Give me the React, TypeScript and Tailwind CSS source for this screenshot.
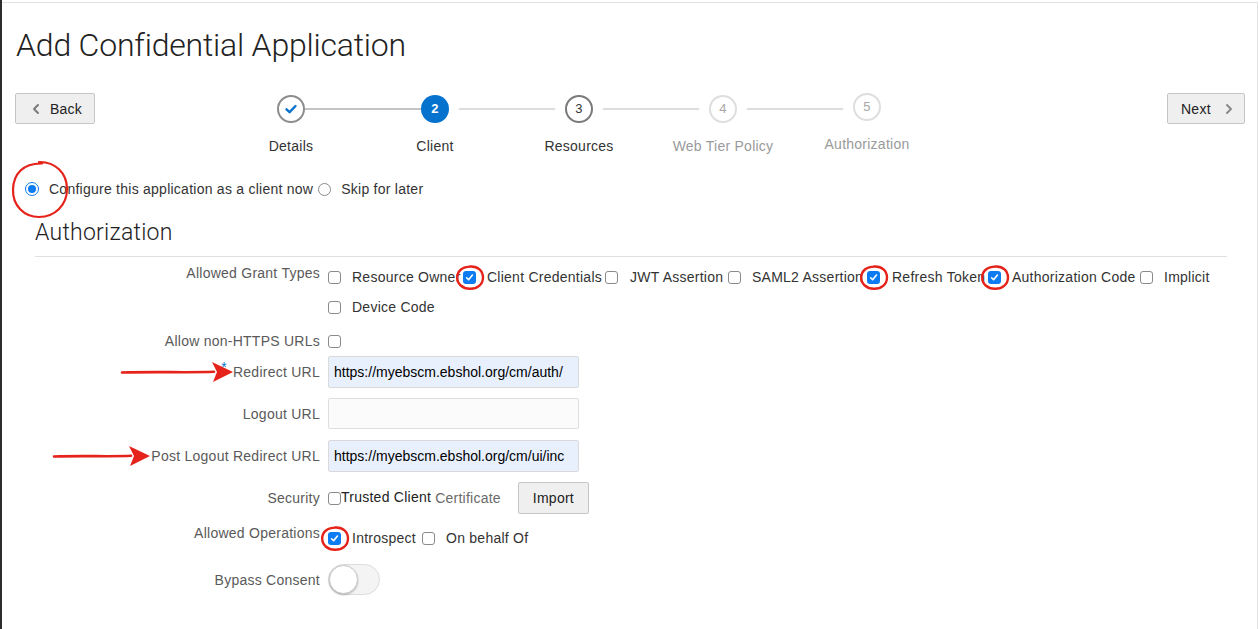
import React from "react";
import { ChevronLeft, ChevronRight } from "lucide-react";

const RED = "#e5231b";

function Box({ checked, circled }: { checked?: boolean; circled?: boolean }) {
  return (
    <span className="relative inline-flex w-[13px] h-[13px] shrink-0">
      {checked ? (
        <span className="w-[13px] h-[13px] rounded-[3px] bg-[#0d7cf2] flex items-center justify-center">
          <svg width="9" height="9" viewBox="0 0 10 10">
            <path d="M1.8 5.3 L4 7.5 L8.3 2.3" fill="none" stroke="#fff" strokeWidth="1.8" strokeLinecap="round" strokeLinejoin="round" />
          </svg>
        </span>
      ) : (
        <span className="w-[13px] h-[13px] rounded-[3px] border border-[#8a8a8a] bg-white" />
      )}
      {circled && (
        <svg className="absolute left-[-8px] top-[-7px] pointer-events-none" width="30" height="27" viewBox="0 0 30 27">
          <path d="M15 2.5 C23 2 28 7 28 13.5 C28 20.5 22 25 15 24.8 C7.5 24.6 2 20 2.2 13.3 C2.4 6.8 7.5 2.6 15.5 2.6" fill="none" stroke={RED} strokeWidth="2.4" strokeLinecap="round" />
        </svg>
      )}
    </span>
  );
}

function Opt({ label, checked, circled, w, gap = "ml-[11px]" }: { label: string; checked?: boolean; circled?: boolean; w?: string; gap?: string }) {
  return (
    <span className={`inline-flex items-center whitespace-nowrap ${w ?? ""}`}>
      <Box checked={checked} circled={circled} />
      <span className={`${gap} text-[#333]`}>{label}</span>
    </span>
  );
}

function Line({ kind, side }: { kind?: "dark" | "light"; side: "l" | "r" }) {
  return (
    <span className="flex-1 flex items-center">
      {kind === "dark" && <span className="flex-1 h-[2px] bg-[#c4c4c4]" />}
      {kind === "light" && <span className={`flex-1 h-[2px] bg-[#dddddd] ${side === "l" ? "mr-[10px]" : "ml-[10px]"}`} />}
    </span>
  );
}

function Step({ n, label, state, lineLeft, lineRight, lift }: { n: number; label: string; state: "done" | "active" | "next" | "off"; lineLeft?: "dark" | "light"; lineRight?: "dark" | "light"; lift?: boolean }) {
  const liftCls = lift ? "relative -top-[2px]" : "";
  const circle =
    state === "done" ? (
      <span className="w-[28px] h-[28px] shrink-0 rounded-full border-2 border-[#8d8d8d] bg-white flex items-center justify-center">
        <svg width="14" height="14" viewBox="0 0 14 14">
          <path d="M2.5 7.3 L5.6 10.2 L11.5 4" fill="none" stroke="#0572ce" strokeWidth="2.4" strokeLinecap="round" strokeLinejoin="round" />
        </svg>
      </span>
    ) : state === "active" ? (
      <span className="w-[28px] h-[28px] shrink-0 rounded-full bg-[#0572ce] text-white text-[13px] font-bold flex items-center justify-center">{n}</span>
    ) : state === "next" ? (
      <span className="w-[28px] h-[28px] shrink-0 rounded-full border-2 border-[#7a7a7a] bg-white text-[#333] text-[13px] flex items-center justify-center">{n}</span>
    ) : (
      <span className={`w-[28px] h-[28px] shrink-0 rounded-full border-2 border-[#dedede] bg-white text-[#a6a6a6] text-[13px] flex items-center justify-center ${liftCls}`}>{n}</span>
    );
  return (
    <div className="w-[144px] flex flex-col items-center">
      <div className="w-full flex items-center h-[28px]">
        <Line kind={lineLeft} side="l" />
        {circle}
        <Line kind={lineRight} side="r" />
      </div>
      <div className={`mt-[13px] text-[14px] leading-[20px] whitespace-nowrap ${liftCls} ${state === "off" ? "text-[#9a9a9a]" : "text-[#333]"}`}>{label}</div>
    </div>
  );
}

function Label({ children, className = "" }: { children: React.ReactNode; className?: string }) {
  return <div className={`w-[318px] shrink-0 text-right text-[#5a5a5a] ${className}`}>{children}</div>;
}

function Arrow({ x1, x2 }: { x1: number; x2: number }) {
  const w = x2 - x1;
  return (
    <svg width={w} height="24" viewBox={`0 0 ${w} 24`}>
      <path d={`M2 12.5 C${w * 0.3} 11.5 ${w * 0.6} 12.8 ${w - 20} 11.8`} fill="none" stroke={RED} strokeWidth="2.6" strokeLinecap="round" />
      <path d={`M${w - 22} 2 L${w - 1} 12 L${w - 21} 22 L${w - 17} 12 Z`} fill={RED} />
    </svg>
  );
}

export default function App() {
  return (
    <div className="w-[1259px] h-[629px] flex bg-white overflow-hidden tracking-[0.25px]" style={{ fontFamily: '"Liberation Sans", Arial, sans-serif' }}>
      <div className="w-[2px] shrink-0 bg-[#2d2d2d]" />
      <div className="relative w-[1256px] shrink-0 mt-[2px] border-t border-r border-[#e2e2e2] text-[14px] leading-[20px]">
        <h1 className="ml-[14px] mt-[24px] text-[32px] leading-[36px] font-light text-[#222] tracking-[-0.2px]" style={{ fontFamily: 'Roboto, "Liberation Sans", sans-serif' }}>
          Add Confidential Application
        </h1>

        <div className="mt-[30px] flex items-start">
          <button className="ml-[13px] w-[80px] h-[31px] bg-[#efefef] border border-[#c6c6c6] rounded-[2px] flex items-center text-[#222]">
            <ChevronLeft size={16} strokeWidth={3} color="#7a7a7a" className="ml-[12px]" />
            <span className="ml-[6px]">Back</span>
          </button>
          <div className="ml-[124px] mt-[2px] flex">
            <Step n={1} label="Details" state="done" lineRight="dark" />
            <Step n={2} label="Client" state="active" lineLeft="dark" lineRight="light" />
            <Step n={3} label="Resources" state="next" lineLeft="light" lineRight="light" />
            <Step n={4} label="Web Tier Policy" state="off" lineLeft="light" lineRight="light" />
            <Step n={5} label="Authorization" state="off" lineLeft="light" lift />
          </div>
          <button className="ml-[228px] w-[78px] h-[31px] bg-[#efefef] border border-[#c6c6c6] rounded-[2px] flex items-center text-[#222]">
            <span className="ml-[13px]">Next</span>
            <ChevronRight size={16} strokeWidth={3} color="#8a8a8a" className="ml-[10px]" />
          </button>
        </div>

        <div className="mt-[23px] flex items-center text-[#333]">
          <span className="relative ml-[23px] w-[14px] h-[14px] rounded-full border-[1.5px] border-[#0d7cf2] bg-white flex items-center justify-center">
            <span className="w-[8px] h-[8px] rounded-full bg-[#0d7cf2]" />
            <svg className="absolute left-[-17px] top-[-24px] pointer-events-none" width="62" height="62" viewBox="0 0 62 62">
              <path d="M30 3 C46 2.5 58 14 58 30 C58 46 46 58 30 58 C15 58 3.5 46.5 4 30.5 C4.5 15 14 4 33 4.5" fill="none" stroke={RED} strokeWidth="2.2" strokeLinecap="round" />
            </svg>
          </span>
          <span className="ml-[10px]">Configure this application as a client now</span>
          <span className="ml-[5px] w-[13px] h-[13px] rounded-full border border-[#8a8a8a] bg-white" />
          <span className="ml-[10px]">Skip for later</span>
        </div>

        <div className="ml-[33px] mr-[30px] mt-[20px]">
          <h2 className="text-[23px] leading-[28px] font-light text-[#222]" style={{ fontFamily: 'Roboto, "Liberation Sans", sans-serif' }}>
            Authorization
          </h2>
          <div className="mt-[9px] h-px bg-[#e0e0e0]" />
        </div>

        <div className="mt-[6px] flex">
          <Label>Allowed Grant Types</Label>
          <div className="ml-[8px] pt-[4px] flex flex-col gap-y-[10px]">
            <div className="flex">
              <Opt label="Resource Owner" w="w-[135px]" />
              <Opt label="Client Credentials" checked circled w="w-[142px]" />
              <Opt label="JWT Assertion" w="w-[123px]" gap="ml-[12px]" />
              <Opt label="SAML2 Assertion" w="w-[139px]" gap="ml-[11px]" />
              <Opt label="Refresh Token" checked circled w="w-[121px]" gap="ml-[12px]" />
              <Opt label="Authorization Code" checked circled w="w-[152px]" gap="ml-[11px]" />
              <Opt label="Implicit" gap="ml-[11px]" />
            </div>
            <div className="flex">
              <Opt label="Device Code" />
            </div>
          </div>
        </div>

        <div className="mt-[14px] flex items-center">
          <Label>Allow non-HTTPS URLs</Label>
          <span className="ml-[8px] inline-flex"><Box /></span>
        </div>

        <div className="relative mt-[5px] flex items-center">
          <div className="absolute left-[118px] top-[4px]"><Arrow x1={118} x2={232} /></div>
          <Label>
            <span className="relative -top-[5px] text-[#0572ce] mr-[6px]">*</span>Redirect URL
          </Label>
          <div className="ml-[8px] w-[251px] h-[32px] border border-[#dadada] rounded-[2px] bg-[#e8f0fe] pl-[5px] flex items-center overflow-hidden whitespace-nowrap text-black tracking-normal">
            https://myebscm.ebshol.org/cm/auth/
          </div>
        </div>

        <div className="mt-[10px] flex items-center">
          <Label>Logout URL</Label>
          <div className="ml-[8px] w-[251px] h-[31px] border border-[#dedede] rounded-[2px] bg-[#fbfbfb]" />
        </div>

        <div className="relative mt-[11px] flex items-center">
          <div className="absolute left-[50px] top-[4px]"><Arrow x1={50} x2={149} /></div>
          <Label>Post Logout Redirect URL</Label>
          <div className="ml-[8px] w-[251px] h-[32px] border border-[#dadada] rounded-[2px] bg-[#e8f0fe] pl-[5px] flex items-center overflow-hidden whitespace-nowrap text-black tracking-normal">
            https://myebscm.ebshol.org/cm/ui/inc
          </div>
        </div>

        <div className="mt-[10px] flex items-center">
          <Label>Security</Label>
          <span className="ml-[8px] inline-flex"><Box /></span>
          <span className="text-[#222] -mt-[2px]">Trusted Client</span>
          <span className="ml-[4px] text-[#6a6a6a]">Certificate</span>
          <button className="ml-[17px] w-[71px] h-[32px] bg-[#efefef] border border-[#c6c6c6] rounded-[2px] text-[#222]">Import</button>
        </div>

        <div className="mt-[9px] flex">
          <Label>Allowed Operations</Label>
          <div className="ml-[8px] pt-[5px] flex items-center">
            <Opt label="Introspect" checked circled w="w-[94px]" gap="ml-[11px]" />
            <Opt label="On behalf Of" gap="ml-[11px]" />
          </div>
        </div>

        <div className="mt-[16px] flex items-center">
          <Label>Bypass Consent</Label>
          <div className="ml-[8px] w-[52px] h-[31px] rounded-full bg-[#f4f4f4] border border-[#dcdcdc] relative">
            <span className="absolute left-0 top-0 w-[29px] h-[29px] rounded-full bg-white border border-[#c8c8c8] shadow-[0_1px_2px_rgba(0,0,0,0.25)]" />
          </div>
        </div>
      </div>
    </div>
  );
}
